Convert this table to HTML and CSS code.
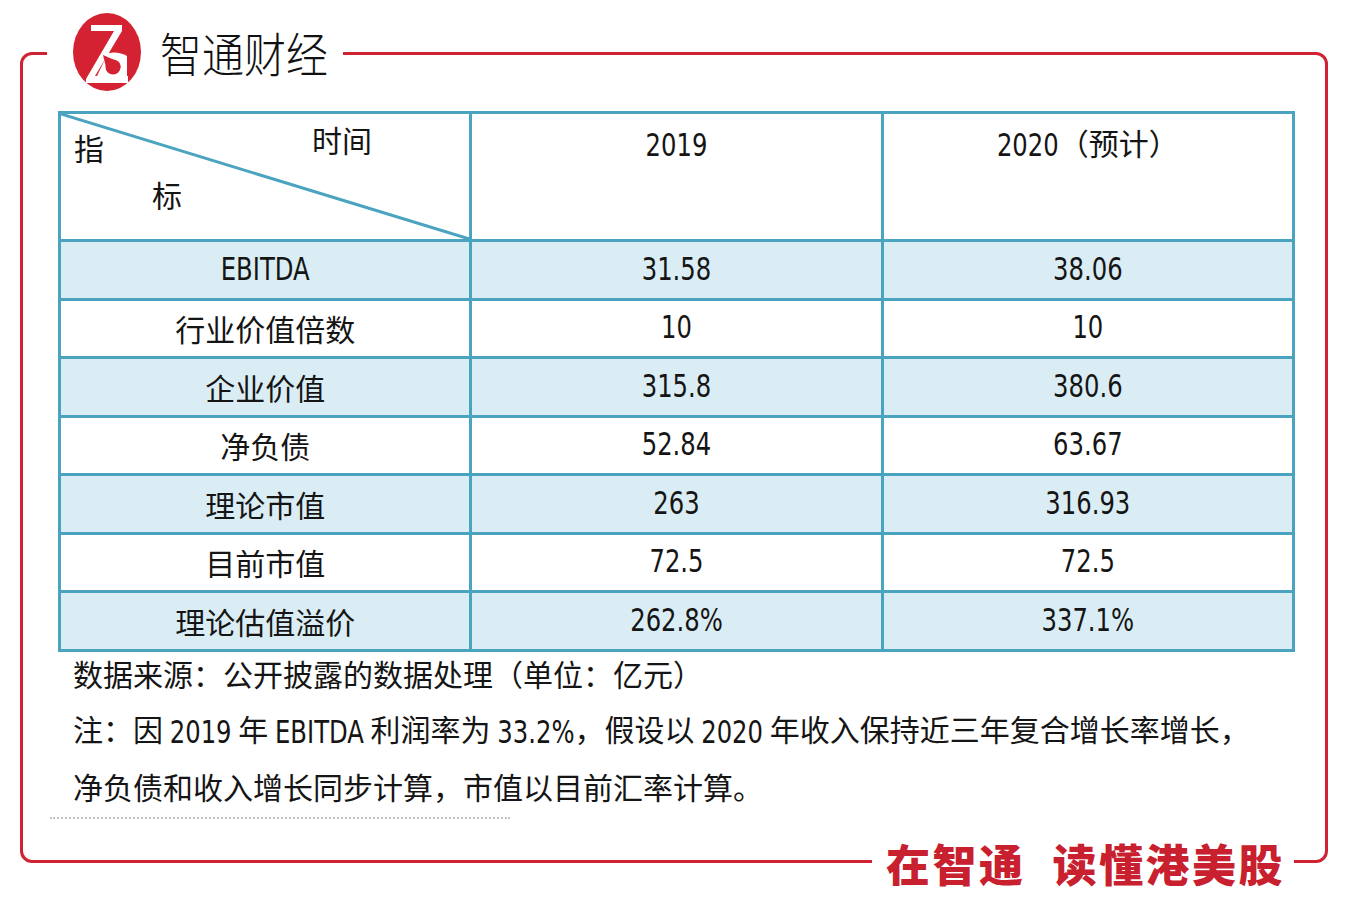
FILE: index.html
```html
<!DOCTYPE html>
<html lang="zh-CN">
<head>
<meta charset="utf-8">
<title>智通财经</title>
<link rel="stylesheet" href="styles.css">
</head>
<body>
<div class="page">
  <div class="frame">
    <div class="brand">
      <svg class="brand-logo" viewBox="0 0 68 78" width="68" height="78">
        <ellipse cx="34" cy="39" rx="34" ry="39" fill="#d42232"/>
        <path d="M18,12 H49 V18 L22,63 H55 V70 H13 V66 L41,18 H18 Z" fill="#fff"/>
        <path d="M35,40 Q46,38 54,43 V63 H24 Z" fill="#fff"/>
        <path d="M30,42 L46,49 A7.5,7.5 0 1 1 34,58 Z" fill="#d42232"/>
        <circle cx="40" cy="54" r="7.5" fill="#d42232"/>
      </svg>
      <span class="brand-name">智通财经</span>
    </div>

    <div class="table">
      <div class="cell head diag">
        <svg class="diag-line" viewBox="0 0 100 100" preserveAspectRatio="none">
          <line x1="0" y1="0" x2="100" y2="100" stroke="#4aa3bf" stroke-width="3" vector-effect="non-scaling-stroke"/>
        </svg>
        <span class="t-time">时间</span>
        <span class="t-zhi">指</span>
        <span class="t-biao">标</span>
      </div>
      <div class="cell head"><span class="lat">2019</span></div>
      <div class="cell head"><span class="lat">2020</span>（预计）</div>

      <div class="cell alt"><span class="lat">EBITDA</span></div>
      <div class="cell alt"><span class="lat">31.58</span></div>
      <div class="cell alt"><span class="lat">38.06</span></div>

      <div class="cell">行业价值倍数</div>
      <div class="cell"><span class="lat">10</span></div>
      <div class="cell"><span class="lat">10</span></div>

      <div class="cell alt">企业价值</div>
      <div class="cell alt"><span class="lat">315.8</span></div>
      <div class="cell alt"><span class="lat">380.6</span></div>

      <div class="cell">净负债</div>
      <div class="cell"><span class="lat">52.84</span></div>
      <div class="cell"><span class="lat">63.67</span></div>

      <div class="cell alt">理论市值</div>
      <div class="cell alt"><span class="lat">263</span></div>
      <div class="cell alt"><span class="lat">316.93</span></div>

      <div class="cell">目前市值</div>
      <div class="cell"><span class="lat">72.5</span></div>
      <div class="cell"><span class="lat">72.5</span></div>

      <div class="cell alt">理论估值溢价</div>
      <div class="cell alt"><span class="lat">262.8%</span></div>
      <div class="cell alt"><span class="lat">337.1%</span></div>
    </div>

    <div class="notes">
      <p>数据来源：公开披露的数据处理（单位：亿元）</p>
      <p>注：因 <span class="lat">2019</span> 年 <span class="lat">EBITDA</span> 利润率为 <span class="lat">33.2%</span>，假设以 <span class="lat">2020</span> 年收入保持近三年复合增长率增长，</p>
      <p>净负债和收入增长同步计算，市值以目前汇率计算。</p>
    </div>
    <div class="scrap"></div>

    <div class="slogan"><span class="s1">在智通</span><span class="s2">读懂港美股</span></div>
  </div>
</div>
</body>
</html>
```

FILE: styles.css
```css
html, body {
  margin: 0;
  background: #ffffff;
}
body {
  font-family: "Noto Sans CJK SC", sans-serif;
  color: #151515;
}
.page {
  padding: 52px 0 0 20px;
  height: 914px;
  box-sizing: border-box;
}
.frame {
  position: relative;
  width: 1308px;
  height: 811px;
  box-sizing: border-box;
  border: 3px solid #cf2233;
  border-radius: 12px;
  padding: 56px 0 0 35px;
}
.brand {
  position: absolute;
  top: -43px;
  left: 24px;
  width: 296px;
  height: 80px;
  box-sizing: border-box;
  padding-left: 26px;
  background: #ffffff;
  display: flex;
  align-items: center;
}
.brand-logo {
  display: block;
  flex: none;
}
.brand-name {
  display: inline-block;
  margin-left: 19px;
  font-size: 42px;
  font-weight: 300;
  line-height: 1;
  color: #111;
  transform: scaleY(1.12);
}
.table {
  display: grid;
  grid-template-columns: repeat(3, 1fr);
  grid-template-rows: 125px repeat(7, 55.5px);
  gap: 3px;
  padding: 3px;
  width: 1237px;
  box-sizing: border-box;
  background: #4aa3bf;
}
.cell {
  background: #ffffff;
  display: flex;
  align-items: center;
  justify-content: center;
  font-size: 30px;
  line-height: 1.2;
}
.cell.alt {
  background: #daedf4;
}
.head {
  display: block;
  text-align: center;
  padding-top: 10px;
}
.diag {
  position: relative;
  padding: 0;
}
.diag-line {
  position: absolute;
  left: 0;
  top: 0;
  width: 100%;
  height: 100%;
}
.t-time, .t-zhi, .t-biao {
  position: absolute;
  line-height: 1;
}
.t-time { left: 251px; top: 10px; }
.t-zhi { left: 13px; top: 18px; }
.t-biao { left: 91px; top: 65px; }
.lat {
  display: inline-block;
  font-family: "Liberation Sans Narrow", "DejaVu Sans Condensed", sans-serif;
  font-size: 27px;
  transform: scaleY(1.16);
}
.notes {
  margin: -6px 0 0 15px;
  font-size: 30px;
  line-height: 55px;
}
.notes p {
  margin: 0;
}
.scrap {
  margin: 3px 0 0 -8px;
  width: 460px;
  border-top: 2px dotted #c4c4c4;
}
.slogan {
  position: absolute;
  left: 849px;
  top: 783px;
  width: 422px;
  height: 50px;
  box-sizing: border-box;
  padding-left: 14px;
  background: #ffffff;
  display: flex;
  align-items: center;
  color: #c8202f;
  font-size: 44px;
  font-weight: 900;
  line-height: 50px;
  letter-spacing: 2.5px;
}
.s2 {
  margin-left: 27px;
}
```
